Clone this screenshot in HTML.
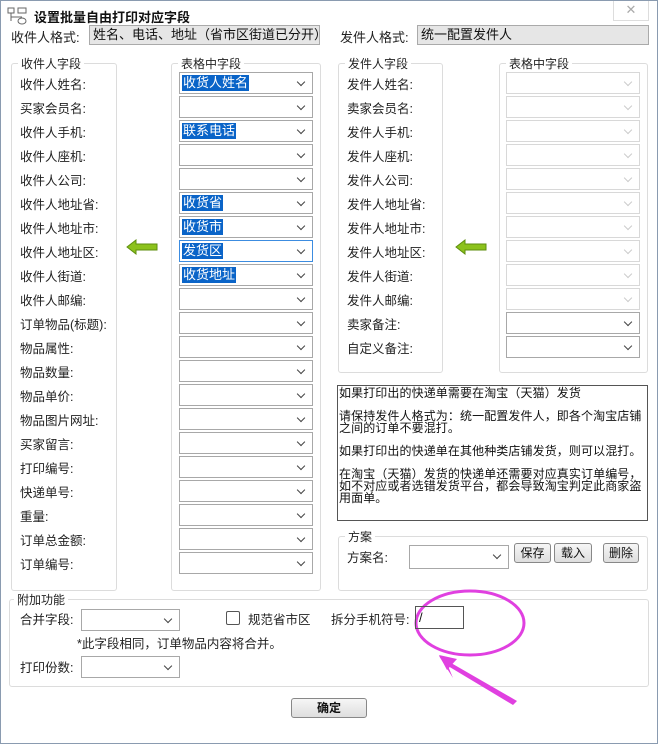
<!DOCTYPE html>
<html><head><meta charset="utf-8"><style>
*{margin:0;padding:0;box-sizing:border-box}
body{width:658px;height:744px;background:#fff;font-family:"Liberation Sans","Noto Sans CJK SC",sans-serif;font-size:12px;color:#111;position:relative;overflow:hidden}
.win{position:absolute;left:0;top:0;width:658px;height:744px;border:1px solid #8a9bb0;background:#fff}
.a{position:absolute;white-space:nowrap}
.g{position:absolute;border:1px solid #dcdcdc;border-radius:3px}
.gt{position:absolute;top:-9px;left:6px;background:#fff;padding:0 3px;font-size:12px;color:#222}
.dd{position:absolute;width:134px;height:22px;border:1px solid #a8a8a8;background:#fff}
.dd::after{content:"";position:absolute;right:8px;top:6px;width:5px;height:5px;border-right:1px solid #444;border-bottom:1px solid #444;transform:rotate(45deg)}
.dd.dis{border-color:#d8d8d8}
.dd.dis::after{border-color:#ccc}
.dd span{position:absolute;left:2px;top:2px;background:#0a64c8;color:#fff;padding:0 1px;line-height:16px;font-size:13px}
.lb{position:absolute;font-size:12.5px;color:#222}
.btn{position:absolute;height:20px;border:1px solid #888;border-radius:3px;background:linear-gradient(#f6f6f6,#dedede);text-align:center;line-height:18px;font-size:12px}
</style></head><body>
<div class="win">
<svg class="a" style="left:6px;top:6px" width="22" height="18"><rect x="1" y="1" width="6" height="5" fill="none" stroke="#666"/><line x1="4" y1="6" x2="4" y2="14" stroke="#666"/><rect x="11" y="1" width="8" height="5" fill="none" stroke="#666"/><line x1="4" y1="10" x2="15" y2="10" stroke="#666"/><ellipse cx="15" cy="14" rx="4" ry="3" fill="none" stroke="#666"/></svg>
<div class="a" style="left:33px;top:6px;font-weight:bold;font-size:13px">设置批量自由打印对应字段</div>
<div class="a" style="left:612px;top:0;width:36px;height:20px;border:1px solid #ddd;border-top:none;color:#aaa;text-align:center;line-height:18px;font-size:13px">✕</div>

<div class="lb" style="left:10px;top:26px;font-size:13px">收件人格式:</div>
<div class="a" style="left:88px;top:24px;width:231px;height:20px;border:1px solid #aaa;background:#e6e6e6;font-size:13px;line-height:18px;padding-left:3px;overflow:hidden">姓名、电话、地址（省市区街道已分开）</div>
<div class="lb" style="left:339px;top:26px;font-size:13px">发件人格式:</div>
<div class="a" style="left:416px;top:24px;width:232px;height:20px;border:1px solid #aaa;background:#e6e6e6;font-size:13px;line-height:18px;padding-left:3px">统一配置发件人</div>

<div class="g" style="left:10px;top:62px;width:106px;height:528px"><div class="gt">收件人字段</div></div>
<div class="g" style="left:170px;top:62px;width:150px;height:528px"><div class="gt">表格中字段</div></div>
<div class="g" style="left:337px;top:62px;width:105px;height:310px"><div class="gt">发件人字段</div></div>
<div class="g" style="left:498px;top:62px;width:149px;height:310px"><div class="gt">表格中字段</div></div>

<div id="L"></div>

<svg class="a" style="left:124px;top:238px" width="34" height="16"><path d="M2 8 L11 1 L11 5 L32 5 L32 11 L11 11 L11 15 Z" fill="#8cc21c" stroke="#5e8e0e"/></svg>
<svg class="a" style="left:453px;top:238px" width="34" height="16"><path d="M2 8 L11 1 L11 5 L32 5 L32 11 L11 11 L11 15 Z" fill="#8cc21c" stroke="#5e8e0e"/></svg>

<div class="a" style="left:336px;top:384px;width:311px;height:136px;border:1px solid #555;font-size:12px;line-height:12px;padding:1px 1px;white-space:normal;letter-spacing:0.1px">
<div>如果打印出的快递单需要在淘宝（天猫）发货</div>
<div style="margin-top:11px">请保持发件人格式为：统一配置发件人，即各个淘宝店铺之间的订单不要混打。</div>
<div style="margin-top:11px">如果打印出的快递单在其他种类店铺发货，则可以混打。</div>
<div style="margin-top:11px">在淘宝（天猫）发货的快递单还需要对应真实订单编号，如不对应或者选错发货平台，都会导致淘宝判定此商家盗用面单。</div>
</div>

<div class="g" style="left:337px;top:535px;width:310px;height:55px"><div class="gt">方案</div></div>
<div class="lb" style="left:346px;top:546px">方案名:</div>
<div class="dd" style="left:408px;top:544px;width:100px;height:24px"></div>
<div class="btn" style="left:513px;top:542px;width:37px">保存</div>
<div class="btn" style="left:553px;top:542px;width:38px">载入</div>
<div class="btn" style="left:602px;top:542px;width:36px">删除</div>

<div class="g" style="left:8px;top:598px;width:640px;height:88px"><div class="gt" style="left:4px">附加功能</div></div>
<div class="lb" style="left:19px;top:608px">合并字段:</div>
<div class="dd" style="left:80px;top:608px;width:99px;height:22px"></div>
<div class="a" style="left:225px;top:610px;width:14px;height:14px;border:1px solid #555;border-radius:2px"></div>
<div class="lb" style="left:247px;top:608px">规范省市区</div>
<div class="lb" style="left:330px;top:608px">拆分手机符号:</div>
<div class="a" style="left:414px;top:605px;width:49px;height:23px;border:1px solid #555;padding-left:3px;line-height:21px;font-size:13px;z-index:2">/</div>
<div class="lb" style="left:76px;top:632px">*此字段相同，订单物品内容将合并。</div>
<div class="lb" style="left:19px;top:656px">打印份数:</div>
<div class="dd" style="left:80px;top:655px;width:99px;height:22px"></div>

<div class="btn" style="left:290px;top:697px;width:76px;font-weight:bold">确定</div>

<svg class="a" style="left:0;top:0" width="658" height="744"><ellipse cx="469" cy="622" rx="54" ry="32" fill="none" stroke="#e040e0" stroke-width="3"/><path d="M438 655 L516 700 L512 704 L447 665 L452 677 Z" fill="#e040e0"/><path d="M438 654 L456 658 L446 669 Z" fill="#e040e0"/></svg>
</div>
<script>
var L=document.getElementById('L'),h='';
var ll=["收件人姓名:","买家会员名:","收件人手机:","收件人座机:","收件人公司:","收件人地址省:","收件人地址市:","收件人地址区:","收件人街道:","收件人邮编:","订单物品(标题):","物品属性:","物品数量:","物品单价:","物品图片网址:","买家留言:","打印编号:","快递单号:","重量:","订单总金额:","订单编号:"];
var vv={0:"收货人姓名",2:"联系电话",5:"收货省",6:"收货市",7:"发货区",8:"收货地址"};
for(var i=0;i<21;i++){var y=84+i*24;h+='<div class="lb" style="left:19px;top:'+(y-11)+'px">'+ll[i]+'</div><div class="dd" style="left:178px;top:'+(y-13)+'px'+(i==7?';border-color:#3c8ce0':'')+'">'+(vv[i]?'<span>'+vv[i]+'</span>':'')+'</div>';}
var rl=["发件人姓名:","卖家会员名:","发件人手机:","发件人座机:","发件人公司:","发件人地址省:","发件人地址市:","发件人地址区:","发件人街道:","发件人邮编:","卖家备注:","自定义备注:"];
for(var i=0;i<12;i++){var y=84+i*24;h+='<div class="lb" style="left:346px;top:'+(y-11)+'px">'+rl[i]+'</div><div class="dd'+(i<10?' dis':'')+'" style="left:505px;top:'+(y-13)+'px">'+'</div>';}
L.innerHTML=h;
</script>
</body></html>
